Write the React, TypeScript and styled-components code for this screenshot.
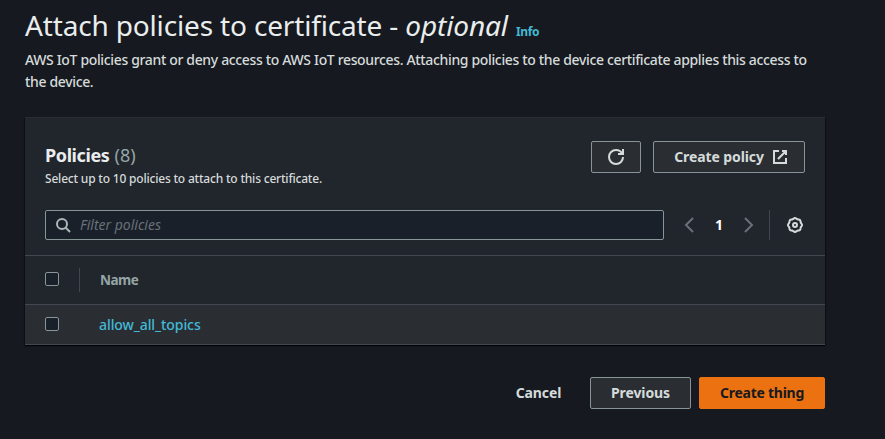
import React from "react";
import styled, { createGlobalStyle } from "styled-components";

const GlobalStyle = createGlobalStyle`
  *, *::before, *::after { box-sizing: border-box; }
  body {
    margin: 0;
    background: #16191f;
    color: #d5dbdb;
    font: 14px/22px "Noto Sans", "Open Sans", sans-serif;
    overflow: hidden;
  }
  h1, h2, p { margin: 0; }
`;

const Page = styled.main`
  width: 885px;
  height: 439px;
  padding: 7px 60px 0 25px;
`;

const Title = styled.h1`
  display: flex;
  align-items: baseline;
  font-size: 28px;
  line-height: 36px;
  font-weight: 400;
  color: #eaeded;
  letter-spacing: -0.16px;
  white-space: pre;
`;

const Optional = styled.em`
  letter-spacing: -0.12px;
`;

const InfoLink = styled.a`
  margin-left: 8px;
  font-size: 12px;
  line-height: 20px;
  font-weight: 700;
  letter-spacing: -0.3px;
  color: #44b9d6;
`;

const Description = styled.p`
  margin-top: 6px;
  white-space: nowrap;
  font-weight: 500;
  letter-spacing: -0.345px;
`;

const Card = styled.section`
  margin-top: 24px;
  height: 228px;
  background: #21252c;
  border-top: 1px solid #2a2e33;
  box-shadow: 0 1px 1px rgba(0, 0, 0, 0.5), 1px 1px 1px rgba(0, 0, 0, 0.3), -1px 1px 1px rgba(0, 0, 0, 0.3);
`;

const CardHeader = styled.header`
  display: flex;
  justify-content: space-between;
  padding: 23px 20px 0;
  height: 92px;
`;

const CardTitle = styled.h2`
  margin-top: 3px;
  font-size: 18px;
  line-height: 22px;
  font-weight: 700;
  color: #eaeded;
  letter-spacing: -0.4px;
  white-space: nowrap;
`;

const Count = styled.span`
  margin-left: 5px;
  font-weight: 400;
  letter-spacing: 0.1px;
  color: #95a5a6;
`;

const CardNote = styled.p`
  margin-top: 3px;
  font-size: 12px;
  line-height: 20px;
  font-weight: 500;
  letter-spacing: -0.2px;
`;

const Actions = styled.div<{ $gap: number }>`
  display: flex;
  gap: ${(p) => p.$gap}px;
`;

const Button = styled.button<{ $width: number; $indent?: number; $kind?: "primary" | "link" }>`
  display: flex;
  align-items: center;
  justify-content: center;
  gap: 8px;
  width: ${(p) => p.$width}px;
  height: 32px;
  padding: 0 0 0 ${(p) => p.$indent ?? 0}px;
  border: 1px solid ${(p) => (p.$kind === "primary" ? "#ec7211" : p.$kind === "link" ? "transparent" : "#879596")};
  border-radius: 2px;
  background: ${(p) => (p.$kind === "primary" ? "#ec7211" : p.$kind === "link" ? "transparent" : "#2a2e33")};
  color: ${(p) => (p.$kind === "primary" ? "#16191f" : "#d5dbdb")};
  font: 700 14px/20px "Noto Sans", "Open Sans", sans-serif;
  letter-spacing: ${(p) => (p.$kind === "primary" ? -0.25 : -0.1)}px;
  white-space: nowrap;
`;

const Toolbar = styled.div`
  display: flex;
  align-items: center;
  height: 30px;
  padding: 0 20px;
`;

const Filter = styled.div`
  display: flex;
  align-items: center;
  gap: 9px;
  width: 619px;
  height: 30px;
  padding-left: 9px;
  border: 1px solid #879596;
  border-radius: 2px;
  background: #1a2029;
  color: #aab7b8;
`;

const Placeholder = styled.span`
  font-style: italic;
  color: #687078;
  letter-spacing: 0;
`;

const Pager = styled.nav`
  display: flex;
  align-items: center;
  justify-content: space-between;
  width: 76px;
  margin-left: 17px;
  color: #687078;
`;

const PageNumber = styled.b`
  color: #ffffff;
`;

const Settings = styled.div`
  display: flex;
  align-items: center;
  height: 30px;
  margin-left: 12px;
  padding-left: 17px;
  border-left: 1px solid #414750;
`;

const HeadRow = styled.div`
  display: flex;
  align-items: center;
  height: 50px;
  margin-top: 15px;
  padding-left: 20px;
  border-top: 1px solid #414750;
  border-bottom: 1px solid #414750;
  color: #95a5a6;
  font-weight: 700;
`;

const Row = styled.div`
  display: flex;
  align-items: center;
  height: 40px;
  padding-left: 20px;
  background: #2a2e33;
  border-bottom: 1px solid #414750;
`;

const Checkbox = styled.span<{ $lift: number }>`
  width: 14px;
  height: 14px;
  margin-bottom: ${(p) => p.$lift}px;
  border: 1px solid #879596;
  border-radius: 2px;
  background: #1a2029;
`;

const ColumnName = styled.span`
  display: flex;
  align-items: center;
  height: 24px;
  margin-left: 20px;
  padding-left: 20px;
  border-left: 1px solid #414750;
  font-size: 13.5px;
  letter-spacing: -0.5px;
`;

const PolicyLink = styled.a`
  margin-left: 40px;
  color: #44b9d6;
  font-weight: 500;
  letter-spacing: -0.08px;
`;

const Footer = styled.footer`
  display: flex;
  justify-content: flex-end;
  gap: 8px;
  margin-top: 32px;
`;

const Icon = styled.svg`
  display: block;
  flex: none;
  width: 16px;
  height: 16px;
  fill: none;
  stroke: currentColor;
  stroke-width: 2;
`;

const gearPath = (() => {
  const points: string[] = [];
  for (let i = 0; i < 64; i++) {
    const a = (i / 64) * Math.PI * 2;
    const r = 6.6 + 0.4 * Math.cos(a * 8);
    points.push(`${(8 + r * Math.cos(a)).toFixed(2)} ${(8 + r * Math.sin(a)).toFixed(2)}`);
  }
  return `M${points.join("L")}Z`;
})();

export default function App() {
  return (
    <>
      <GlobalStyle />
      <Page>
        <Title>
          <span>Attach policies to certificate - </span>
          <Optional>optional</Optional>
          <InfoLink>Info</InfoLink>
        </Title>
        <Description>
          AWS IoT policies grant or deny access to AWS IoT resources. Attaching policies to the device certificate applies this access to
          <br />
          the device.
        </Description>
        <Card>
          <CardHeader>
            <div>
              <CardTitle>
                Policies<Count>(8)</Count>
              </CardTitle>
              <CardNote>Select up to 10 policies to attach to this certificate.</CardNote>
            </div>
            <Actions $gap={12}>
              <Button $width={50} aria-label="Refresh">
                <Icon viewBox="0 0 16 16">
                  <path d="M15 0v5h-5" />
                  <path d="M15 8c0 3.9-3.1 7-7 7s-7-3.1-7-7 3.1-7 7-7c2.8 0 5.3 1.7 6.4 4" />
                </Icon>
              </Button>
              <Button $width={152} $indent={4}>
                <span>Create policy</span>
                <Icon viewBox="0 0 16 16">
                  <path d="M10 2h4v4M6 10l8-8M14 9v5H2V2h5" />
                </Icon>
              </Button>
            </Actions>
          </CardHeader>
          <Toolbar>
            <Filter>
              <Icon viewBox="0 0 16 16">
                <circle cx="7" cy="7" r="5" />
                <path d="M10.5 10.5l4.5 4.5" />
              </Icon>
              <Placeholder>Filter policies</Placeholder>
            </Filter>
            <Pager>
              <Icon viewBox="0 0 16 16">
                <path d="M12 1L5 8l7 7" />
              </Icon>
              <PageNumber>1</PageNumber>
              <Icon viewBox="0 0 16 16">
                <path d="M4 1l7 7-7 7" />
              </Icon>
            </Pager>
            <Settings>
              <Icon viewBox="0 0 16 16">
                <path d={gearPath} />
                <circle cx="8" cy="8" r="2" />
              </Icon>
            </Settings>
          </Toolbar>
          <HeadRow>
            <Checkbox $lift={2} />
            <ColumnName>Name</ColumnName>
          </HeadRow>
          <Row>
            <Checkbox $lift={1} />
            <PolicyLink>allow_all_topics</PolicyLink>
          </Row>
        </Card>
        <Footer>
          <Button $width={87} $kind="link">Cancel</Button>
          <Button $width={101}>Previous</Button>
          <Button $width={126} $kind="primary">Create thing</Button>
        </Footer>
      </Page>
    </>
  );
}
